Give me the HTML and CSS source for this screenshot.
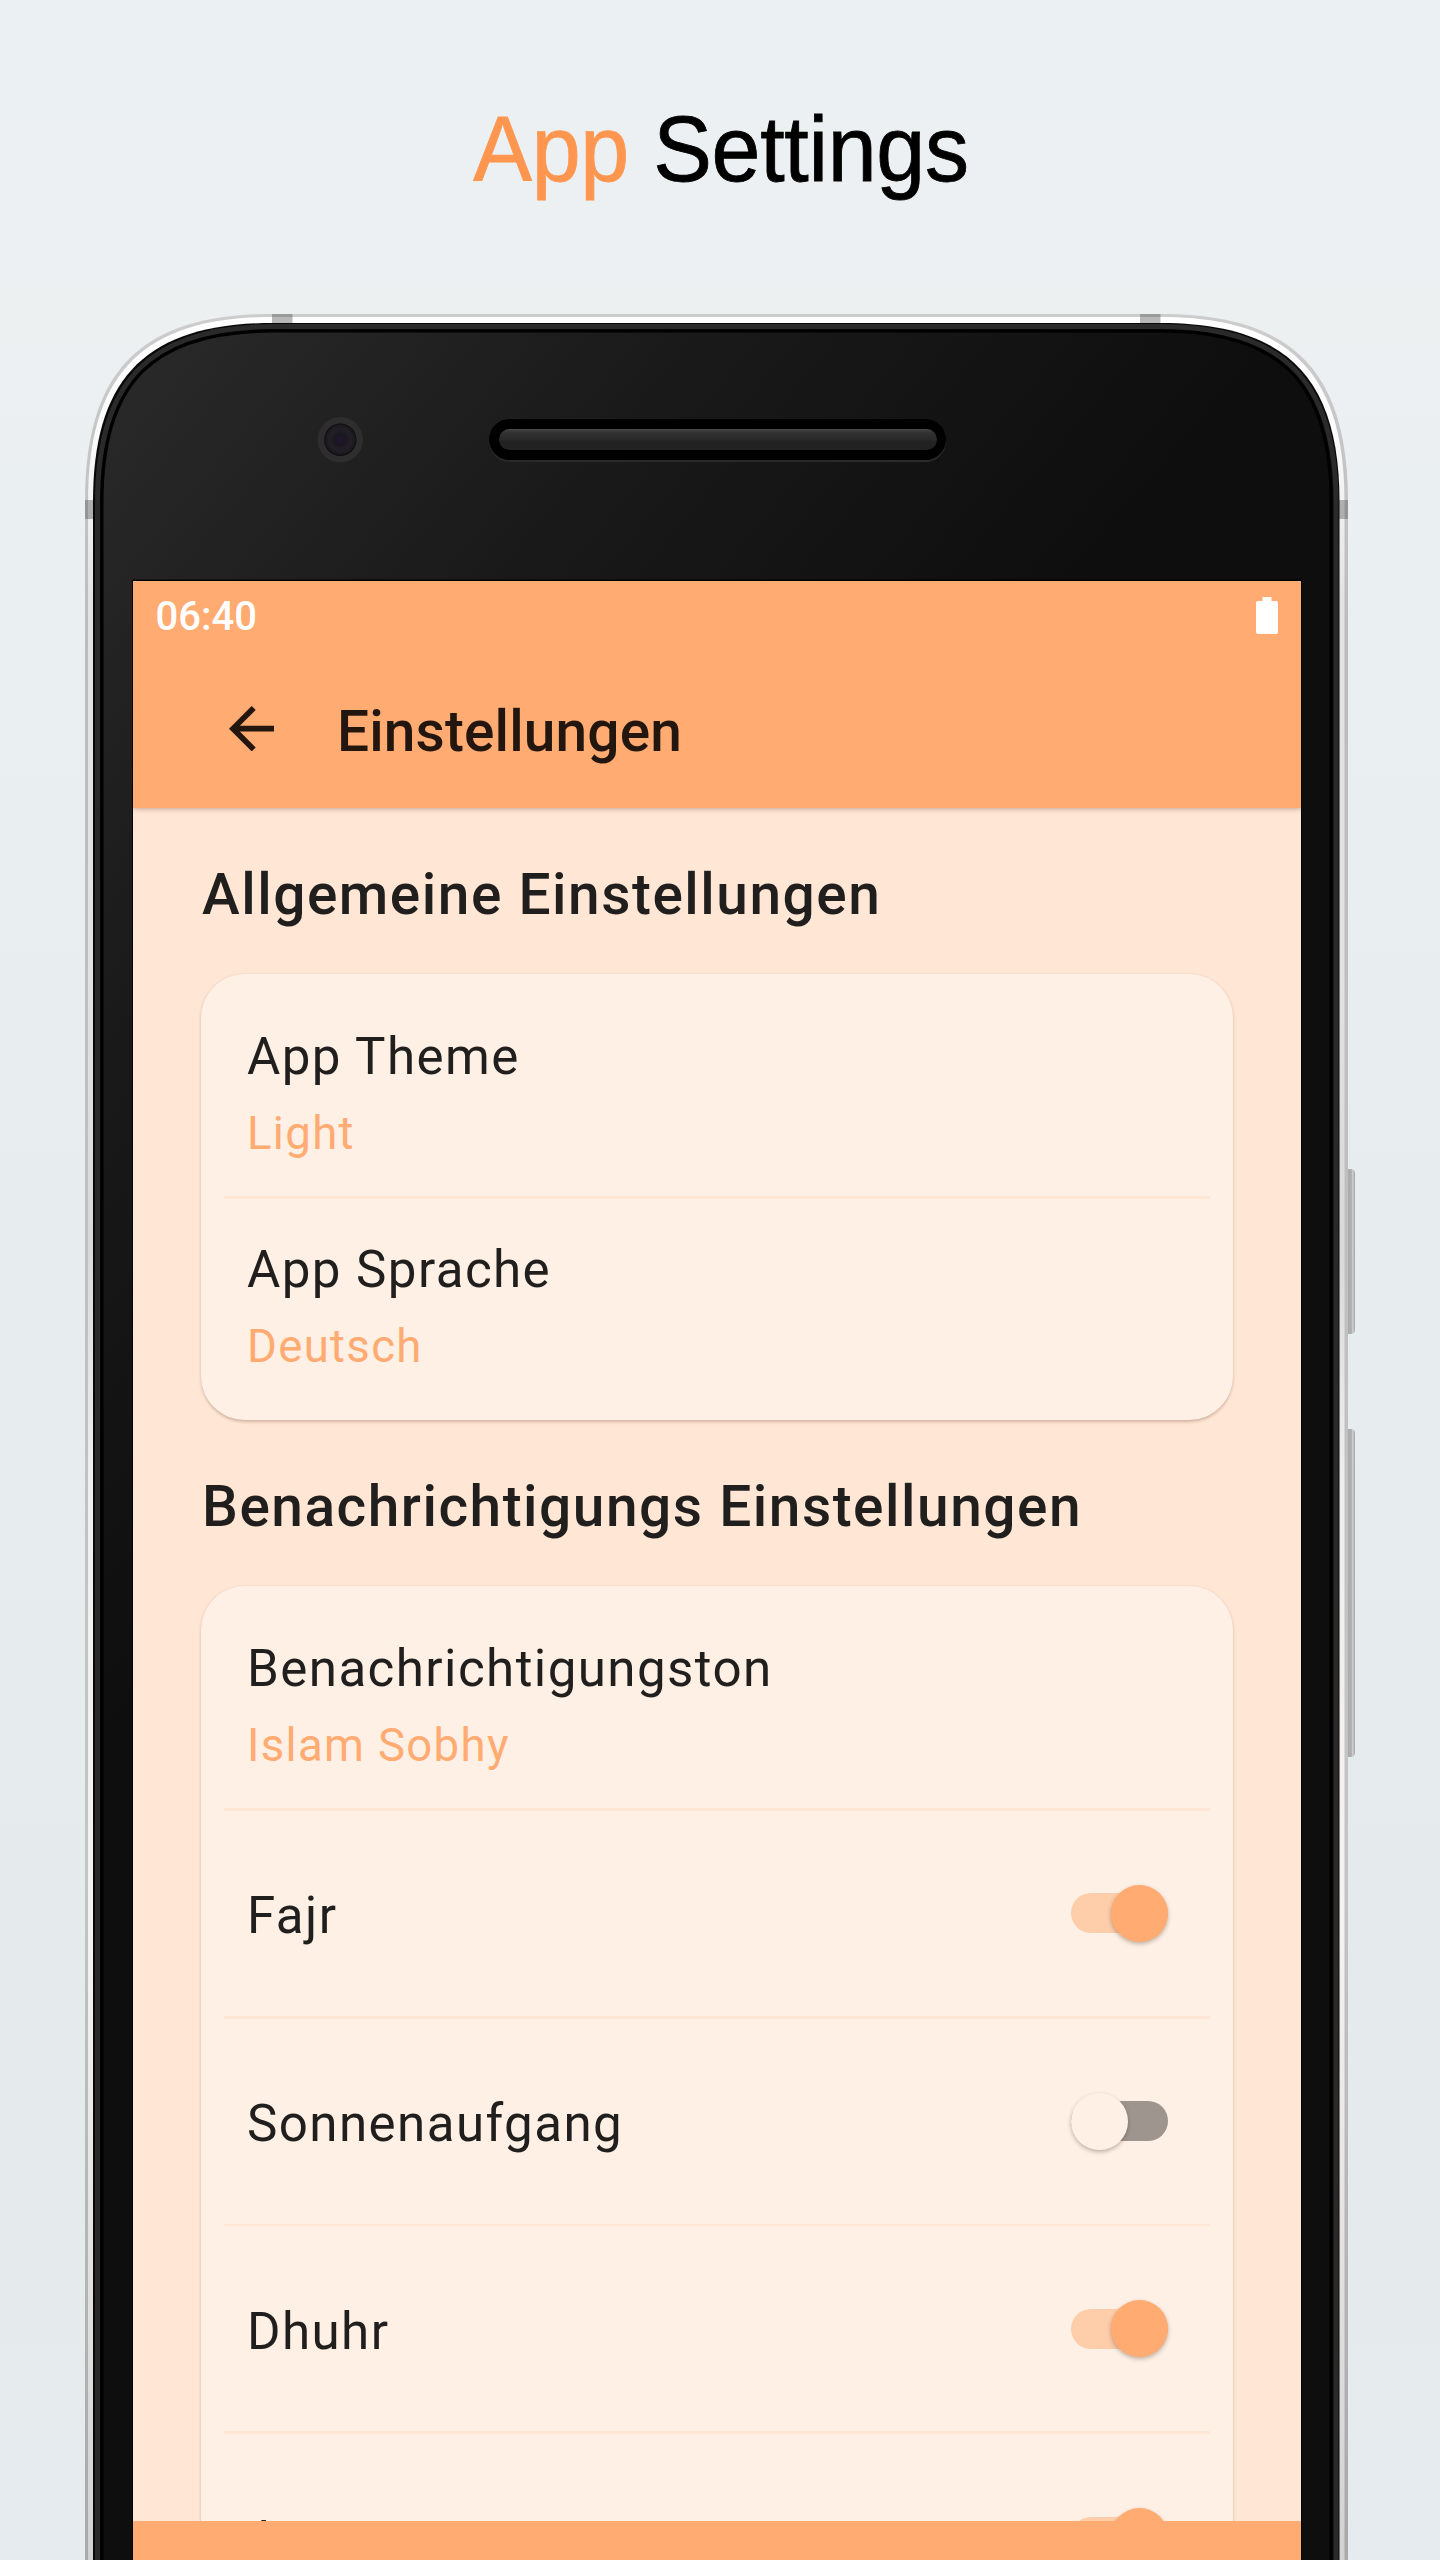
FILE: index.html
```html
<!DOCTYPE html>
<html lang="de">
<head>
<meta charset="utf-8">
<title>App Settings</title>
<link rel="stylesheet" href="styles.css">
</head>
<body>
<main class="page">
  <h1 class="headline"><span class="accent">App</span> Settings</h1>
  <section class="phone">
    <svg class="frame" viewBox="0 0 1440 2260" width="1440" height="2260" aria-hidden="true">
      <defs>
        <linearGradient id="metal" gradientUnits="userSpaceOnUse" x1="0" y1="0" x2="0" y2="2260">
          <stop offset="0" stop-color="#fff"/><stop offset=".06" stop-color="#fbfbfb"/><stop offset=".13" stop-color="#e3e3e3"/><stop offset=".3" stop-color="#e2e2e2"/><stop offset=".42" stop-color="#d9d9d9"/><stop offset=".52" stop-color="#eee"/><stop offset=".72" stop-color="#f5f3f1"/><stop offset="1" stop-color="#d2d2d2"/>
        </linearGradient>
        <linearGradient id="edge" gradientUnits="userSpaceOnUse" x1="0" y1="0" x2="0" y2="2260">
          <stop offset="0" stop-color="#cdcdcd"/><stop offset=".15" stop-color="#bcbcbc"/><stop offset=".7" stop-color="#c4c4c4"/><stop offset="1" stop-color="#a9a9a9"/>
        </linearGradient>
        <linearGradient id="glass" gradientUnits="userSpaceOnUse" x1="130" y1="60" x2="800" y2="620">
          <stop offset="0" stop-color="#292929"/><stop offset=".5" stop-color="#191919"/><stop offset="1" stop-color="#0e0e0e"/>
        </linearGradient>
        <linearGradient id="key" x1="0" x2="1" y1="0" y2="0">
          <stop offset="0" stop-color="#aaa"/><stop offset=".6" stop-color="#b0b0b0"/><stop offset=".75" stop-color="#d2d2d2"/><stop offset="1" stop-color="#a0a0a0"/>
        </linearGradient>
        <linearGradient id="grill" x1="0" x2="0" y1="0" y2="1">
          <stop offset="0" stop-color="#4a4a4a"/><stop offset=".15" stop-color="#333"/><stop offset=".5" stop-color="#292929"/><stop offset=".6" stop-color="#222"/><stop offset="1" stop-color="#222"/>
        </linearGradient>
        <radialGradient id="lens">
          <stop offset="0" stop-color="#20172e"/><stop offset=".35" stop-color="#1a1721"/><stop offset=".7" stop-color="#222026"/><stop offset=".9" stop-color="#1a181c"/><stop offset="1" stop-color="#0a0a0c"/>
        </radialGradient>
      </defs>
      <path d="M1346 869h5q4 0 4 5v155q0 5-4 5h-5zM1346 1129h5q4 0 4 5v318q0 5-4 5h-5z" fill="url(#key)"/>
      <path d="M85 2270V202C85 70 141 14 273 14H1160C1292 14 1348 70 1348 202V2270z" fill="url(#edge)"/>
      <path d="M88 2270V202C88 73 143 17 273 17H1160C1290 17 1344.500 73 1344.500 202V2270z" fill="url(#metal)"/>
      <path d="M272 14h20.500v10h-20.500zM1140 14h20.500v10h-20.500zM85 200h9v19h-9zM1339 200h9v19h-9z" fill="#555" fill-opacity=".42"/>
      <path d="M93 2270V202C93 77 147 23 273 23H1160C1286 23 1339.500 77 1339.500 202V2270z" fill="#080808"/>
      <path d="M97.500 2270V202C97.500 80 151 26.500 273 26.500H1160C1282 26.500 1336 80 1336 202V2270" fill="none" stroke="#2a2a2a" stroke-width="5"/>
      <path d="M102 2270V202C102 82 153 31 273 31H1160C1280 31 1331 82 1331 202V2270z" fill="url(#glass)" stroke="#000" stroke-width="3"/>
      <circle cx="340.300" cy="139.700" r="22.700" fill="#2e2e2e"/>
      <circle cx="340.300" cy="139.700" r="16.200" fill="url(#lens)"/>
      <rect x="489" y="120.500" width="457" height="41.500" rx="20.500" fill="#2a2a2a"/>
      <rect x="489" y="119" width="457" height="41" rx="20.500" fill="#000"/>
      <rect x="499" y="129" width="438" height="21" rx="10.500" fill="url(#grill)"/>
      <rect x="132" y="279.500" width="1170" height="2000" rx="2" fill="#000"/>
    </svg>
    <div class="screen">
      <header class="app-header">
        <div class="status-bar">
          <span class="clock">06:40</span>
          <svg class="battery" viewBox="0 0 22 37" width="22" height="37"><path d="M6.500 0h9v4H20q2 0 2 2v29q0 2-2 2H2q-2 0-2-2V6q0-2 2-2h4.500z" fill="#fff"/></svg>
        </div>
        <div class="toolbar">
          <svg class="back" viewBox="4 4 16 16" width="45.400" height="45.400"><path d="M20 11H7.830l5.590-5.590L12 4l-8 8 8 8 1.410-1.410L7.830 13H20v-2z" fill="#23160e"/></svg>
          <h2 class="toolbar-title">Einstellungen</h2>
        </div>
      </header>
      <div class="content">
        <h3 class="section-title">Allgemeine Einstellungen</h3>
        <div class="card">
          <div class="row detail"><span class="label">App Theme</span><span class="value">Light</span></div>
          <div class="divider"></div>
          <div class="row detail"><span class="label">App Sprache</span><span class="value">Deutsch</span></div>
        </div>
        <h3 class="section-title">Benachrichtigungs Einstellungen</h3>
        <div class="card">
          <div class="row detail"><span class="label">Benachrichtigungston</span><span class="value">Islam Sobhy</span></div>
          <div class="divider"></div>
          <div class="row toggle"><span class="label">Fajr</span><span class="switch on"><i class="thumb"></i></span></div>
          <div class="divider"></div>
          <div class="row toggle"><span class="label">Sonnenaufgang</span><span class="switch"><i class="thumb"></i></span></div>
          <div class="divider"></div>
          <div class="row toggle"><span class="label">Dhuhr</span><span class="switch on"><i class="thumb"></i></span></div>
          <div class="divider"></div>
          <div class="row toggle"><span class="label">Asr</span><span class="switch on"><i class="thumb"></i></span></div>
        </div>
      </div>
      <div class="bottom-bar"></div>
    </div>
  </section>
</main>
</body>
</html>
```
FILE: styles.css
```css
* { box-sizing: border-box; }
body { margin: 0; }
.page {
  width: 1440px;
  height: 2560px;
  overflow: hidden;
  background: linear-gradient(180deg, #ebf0f3 0%, #ecf0f1 12%, #eaeff1 22%, #e8edf0 40%, #e5eaec 75%, #e5ebee 100%);
  font-family: Roboto, "Noto Sans", sans-serif;
}
h1, h2, h3 { margin: 0; font-weight: 500; }
.headline {
  height: 300px;
  padding: 101px 0 0 2px;
  font: 400 88px/100px "Liberation Sans", Arial, sans-serif;
  letter-spacing: -0.300px;
  text-align: center;
  color: #000;
  -webkit-text-stroke: .8px currentColor;
  transform: scaleY(1.045);
  transform-origin: 0 180px;
}
.accent { color: #ff9650; }
.phone {
  position: relative;
  height: 2260px;
  padding: 281px 139px 0 133px;
}
.frame { position: absolute; inset: 0; }
.screen {
  position: relative;
  height: 1979px;
  display: flex;
  flex-direction: column;
  background: #ffe6d5;
}
.app-header {
  position: relative;
  height: 227px;
  flex: none;
  background: #ffab72;
  box-shadow: 0 1px 5px rgba(90, 50, 20, .35);
  clip-path: inset(0 0 -8px 0);
}
.status-bar {
  height: 68px;
  padding: 0 23px 0 22.500px;
  display: flex;
  align-items: center;
  justify-content: space-between;
}
.clock { font-size: 40px; font-weight: 500; line-height: 50px; padding-top: 4px; color: #fff; }
.toolbar { display: flex; align-items: center; height: 159px; padding-left: 96px; }
.toolbar-title { margin: 7px 0 0 62.500px; font-size: 56.800px; line-height: 66px; letter-spacing: .15px; color: #23160e; }
.content { flex: 1; min-height: 0; overflow: hidden; padding: 0 68.500px 0 68px; }
.section-title {
  height: 166px;
  padding: 53.500px 0 0 1px;
  font-size: 56.800px;
  line-height: 66px;
  letter-spacing: 1.520px;
  white-space: nowrap;
  color: #211f1d;
}
.card {
  padding: 11.400px 0;
  border-radius: 44px;
  background: #fff0e5;
  box-shadow: 0 1.500px 3px rgba(90, 50, 25, .27);
}
.row { padding: 0 46px; display: flex; color: #211f1d; }
.label { font-size: 51.100px; line-height: 60px; letter-spacing: 1.420px; }
.value { font-size: 45.500px; line-height: 60px; letter-spacing: 1.350px; color: #ffab72; }
.detail { height: 210.400px; padding-top: 41.400px; flex-direction: column; gap: 17px; }
.toggle { height: 204.900px; align-items: center; justify-content: space-between; padding-right: 64.500px; }
.toggle .label { padding-top: 6px; }
.divider { height: 2.840px; margin: 0 22.500px; background: #ffe6d5; }
.switch { display: flex; align-items: center; width: 97px; height: 40px; border-radius: 20px; background: #9e958e; }
.switch.on { justify-content: flex-end; background: #fecda9; }
.thumb { width: 57px; height: 57px; flex: none; border-radius: 50%; background: #fff0e5; box-shadow: 0 2px 4px rgba(60, 40, 25, .32); }
.on .thumb { background: #ffab72; }
.bottom-bar { height: 39px; flex: none; background: #ffab72; }
```
